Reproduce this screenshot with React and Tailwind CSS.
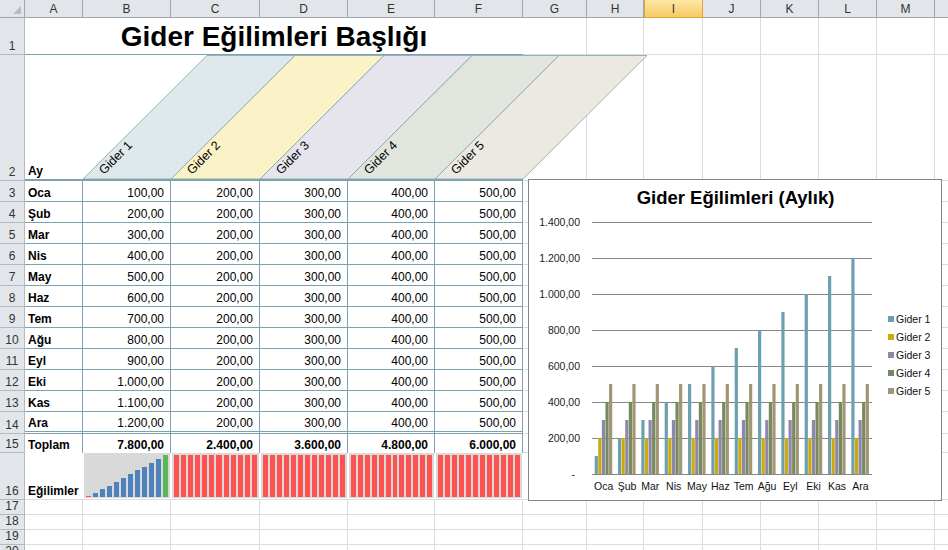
import React from 'react';

const COLS = ['A', 'B', 'C', 'D', 'E', 'F', 'G', 'H', 'I', 'J', 'K', 'L', 'M', ''];
const W = ['w-[58px]', 'w-[88px]', 'w-[89px]', 'w-[88px]', 'w-[87px]', 'w-[88px]', 'w-[64px]', 'w-[57px]', 'w-[59px]', 'w-[58px]', 'w-[58px]', 'w-[58px]', 'w-[58px]', 'w-[58px]'];
const EDGES = [83, 171, 260, 348, 435, 523];

const months = ['Oca', 'Şub', 'Mar', 'Nis', 'May', 'Haz', 'Tem', 'Ağu', 'Eyl', 'Eki', 'Kas', 'Ara'];
const data = months.map((m, i) => [100 * (i + 1), 200, 300, 400, 500]);

const bandColors = ['#DFE8EB', '#FAF3C8', '#E6E5EE', '#E0E6DD', '#ECE9E2'];
const seriesColors = ['#6C9FAF', '#CDA909', '#8D87AC', '#758A5D', '#A19674'];

const fmt = (n) => String(n).replace(/\B(?=(\d{3})+(?!\d))/g, '.') + ',00';

const RowHead = ({ n }) => (
  <div className="w-[25px] shrink-0 bg-[#E2E6EB] border-r border-b border-[#B3BAC2] flex items-end justify-center pb-[1px] leading-[14px] text-[12px] text-[#333]">
    {n}
  </div>
);

const Blanks = () =>
  W.slice(6).map((w, i) => <div key={i} className={`${w} shrink-0 border-r border-b border-[#DADCDD]`} />);

const Row = ({ n, h, children }) => (
  <div className={`flex ${h}`}>
    <RowHead n={n} />
    {children}
    <Blanks />
  </div>
);

const Spark = ({ w, values }) => {
  const flat = values.every((v) => v === values[0]);
  return (
    <div className={`${w} shrink-0 px-[1px] pb-[1px] border-b border-[#DADCDD]`}>
      <div className="h-full bg-[#D9D9D9] flex items-end gap-[2px] px-[2px] pb-[1px]">
        {values.map((v, k) => {
          let color = '#4F81BD';
          let h = Math.max(1.5, 3.8 * k);
          if (flat) {
            color = '#FF5353';
            h = 42;
          } else if (k === 0) color = '#FF5050';
          else if (k === values.length - 1) color = '#5BB75B';
          return <div key={k} className="flex-1" style={{ height: h, background: color }} />;
        })}
      </div>
    </div>
  );
};

const HeaderBands = () => (
  <svg className="absolute left-0 top-[55px] pointer-events-none" width="948" height="126">
    {bandColors.map((c, i) => {
      const L = EDGES[i];
      const R = EDGES[i + 1];
      return (
        <polygon
          key={i}
          points={`${L},124 ${R},124 ${R + 124},0.5 ${L + 124},0.5`}
          fill={c}
          stroke="#7FA3AE"
          strokeWidth="0.8"
        />
      );
    })}
    {bandColors.map((c, i) => (
      <text key={i} transform={`translate(${EDGES[i] + 21},120) rotate(-45)`} fontSize="12.5" fill="#000">
        Gider {i + 1}
      </text>
    ))}
  </svg>
);

const Chart = () => {
  const x0 = 63;
  const x1 = 343;
  const base = 294;
  const catW = (x1 - x0) / 12;
  const bw = catW / 6.5;
  const yLabels = ['1.400,00', '1.200,00', '1.000,00', '800,00', '600,00', '400,00', '200,00', '-'];
  return (
    <div className="absolute left-[528px] top-[179px] w-[414px] h-[322px] border border-[#868686] bg-white">
      <svg width="412" height="320" className="block">
        <text x="206.5" y="24" textAnchor="middle" fontSize="18.5" fontWeight="bold" fill="#000">
          Gider Eğilimleri (Aylık)
        </text>
        {yLabels.map((t, i) => (
          <g key={t}>
            <line x1={x0} x2={x1} y1={42 + 36 * i + 0.5} y2={42 + 36 * i + 0.5} stroke="#868686" strokeWidth="1" />
            <text x={t === '-' ? 46 : 51} y={42 + 36 * i + 4} textAnchor="end" fontSize="10.5" fill="#222">
              {t}
            </text>
          </g>
        ))}
        {data.map((row, m) => (
          <g key={m}>
            {row.map((v, s) => {
              const h = (v / 200) * 36;
              return (
                <rect
                  key={s}
                  x={x0 + m * catW + bw * 0.75 + s * bw}
                  y={base - h}
                  width={bw - 0.4}
                  height={h}
                  fill={seriesColors[s]}
                />
              );
            })}
            <text x={x0 + (m + 0.5) * catW} y="310" textAnchor="middle" fontSize="10.5" fill="#111">
              {months[m]}
            </text>
          </g>
        ))}
        <line x1={x0} x2={x1} y1={base + 0.5} y2={base + 0.5} stroke="#868686" strokeWidth="1" />
        {seriesColors.map((c, i) => (
          <g key={c}>
            <rect x="359" y={136 + 18 * i} width="6" height="6" fill={c} />
            <text x="367" y={143 + 18 * i} fontSize="10.5" fill="#111">
              Gider {i + 1}
            </text>
          </g>
        ))}
      </svg>
    </div>
  );
};

export default function App() {
  return (
    <div className="relative w-[948px] h-[550px] overflow-hidden bg-white font-['Liberation_Sans',Arial,sans-serif] text-[12px] text-black">
      {/* column headers */}
      <div className="flex h-[18px]">
        <div className="w-[25px] shrink-0 bg-[#E2E6EB] border-r border-b border-[#9DA6B0] flex items-end justify-end pr-[3px] pb-[3px]">
          <svg width="8" height="8">
            <polygon points="8,0 8,8 0,8" fill="#B7BCC3" />
          </svg>
        </div>
        {COLS.map((c, i) =>
          c === 'I' ? (
            <div
              key={i}
              className={`${W[i]} shrink-0 bg-gradient-to-b from-[#FDE8A4] to-[#F6CA62] border-x border-b border-[#E0A43A] flex items-center justify-center text-[12px] text-[#333]`}
            >
              {c}
            </div>
          ) : (
            <div
              key={i}
              className={`${W[i]} shrink-0 bg-[#E2E6EB] border-r border-b border-[#9DA6B0] flex items-center justify-center text-[12px] text-[#333]`}
            >
              {c}
            </div>
          )
        )}
      </div>

      {/* row 1: title */}
      <Row n={1} h="h-[37px]">
        <div className="w-[498px] shrink-0 border-b border-[#7BA3AF] flex items-end justify-center pb-[3px]">
          <span className="text-[28px] font-bold leading-none">Gider Eğilimleri Başlığı</span>
        </div>
      </Row>

      {/* row 2: slanted headers */}
      <Row n={2} h="h-[126px]">
        <div className="w-[498px] shrink-0 border-b-2 border-[#7BA3AF] flex items-end pl-[3px] pb-[1px] leading-[14px] font-bold">
          Ay
        </div>
      </Row>

      {/* rows 3-14: data */}
      {months.map((m, i) => (
        <Row key={m} n={i + 3} h={i === 11 ? 'h-[22px]' : 'h-[21px]'}>
          <div
            className={`w-[58px] shrink-0 border-r ${i === 11 ? 'border-b-[3px] border-double' : 'border-b'} border-[#7BA3AF] flex items-end pl-[3px] pb-[1px] leading-[14px] font-bold`}
          >
            {m}
          </div>
          {data[i].map((v, k) => (
            <div
              key={k}
              className={`${W[k + 1]} shrink-0 border-r ${i === 11 ? 'border-b-[3px] border-double' : 'border-b'} border-[#7BA3AF] flex items-end justify-end pr-[6px] pb-[1px] leading-[14px]`}
            >
              {fmt(v)}
            </div>
          ))}
        </Row>
      ))}

      {/* row 15: totals */}
      <Row n={15} h="h-[19px]">
        <div className="w-[58px] shrink-0 border-r border-[#7BA3AF] flex items-end pl-[3px] pb-[1px] leading-[14px] font-bold">
          Toplam
        </div>
        {[0, 1, 2, 3, 4].map((k) => (
          <div
            key={k}
            className={`${W[k + 1]} shrink-0 border-r border-[#7BA3AF] flex items-end justify-end pr-[6px] pb-[1px] leading-[14px] font-bold`}
          >
            {fmt(data.reduce((s, r) => s + r[k], 0))}
          </div>
        ))}
      </Row>

      {/* row 16: sparklines */}
      <Row n={16} h="h-[47px]">
        <div className="w-[58px] shrink-0 border-b border-[#DADCDD] flex items-end pl-[3px] pb-[1px] leading-[14px] font-bold">
          Eğilimler
        </div>
        {[0, 1, 2, 3, 4].map((k) => (
          <Spark key={k} w={W[k + 1]} values={data.map((r) => r[k])} />
        ))}
      </Row>

      {/* empty rows */}
      {[17, 18, 19, 20].map((n) => (
        <Row key={n} n={n} h="h-[15px]">
          {W.slice(0, 6).map((w, i) => (
            <div key={i} className={`${w} shrink-0 border-r border-b border-[#DADCDD]`} />
          ))}
        </Row>
      ))}

      <HeaderBands />
      <Chart />
    </div>
  );
}
